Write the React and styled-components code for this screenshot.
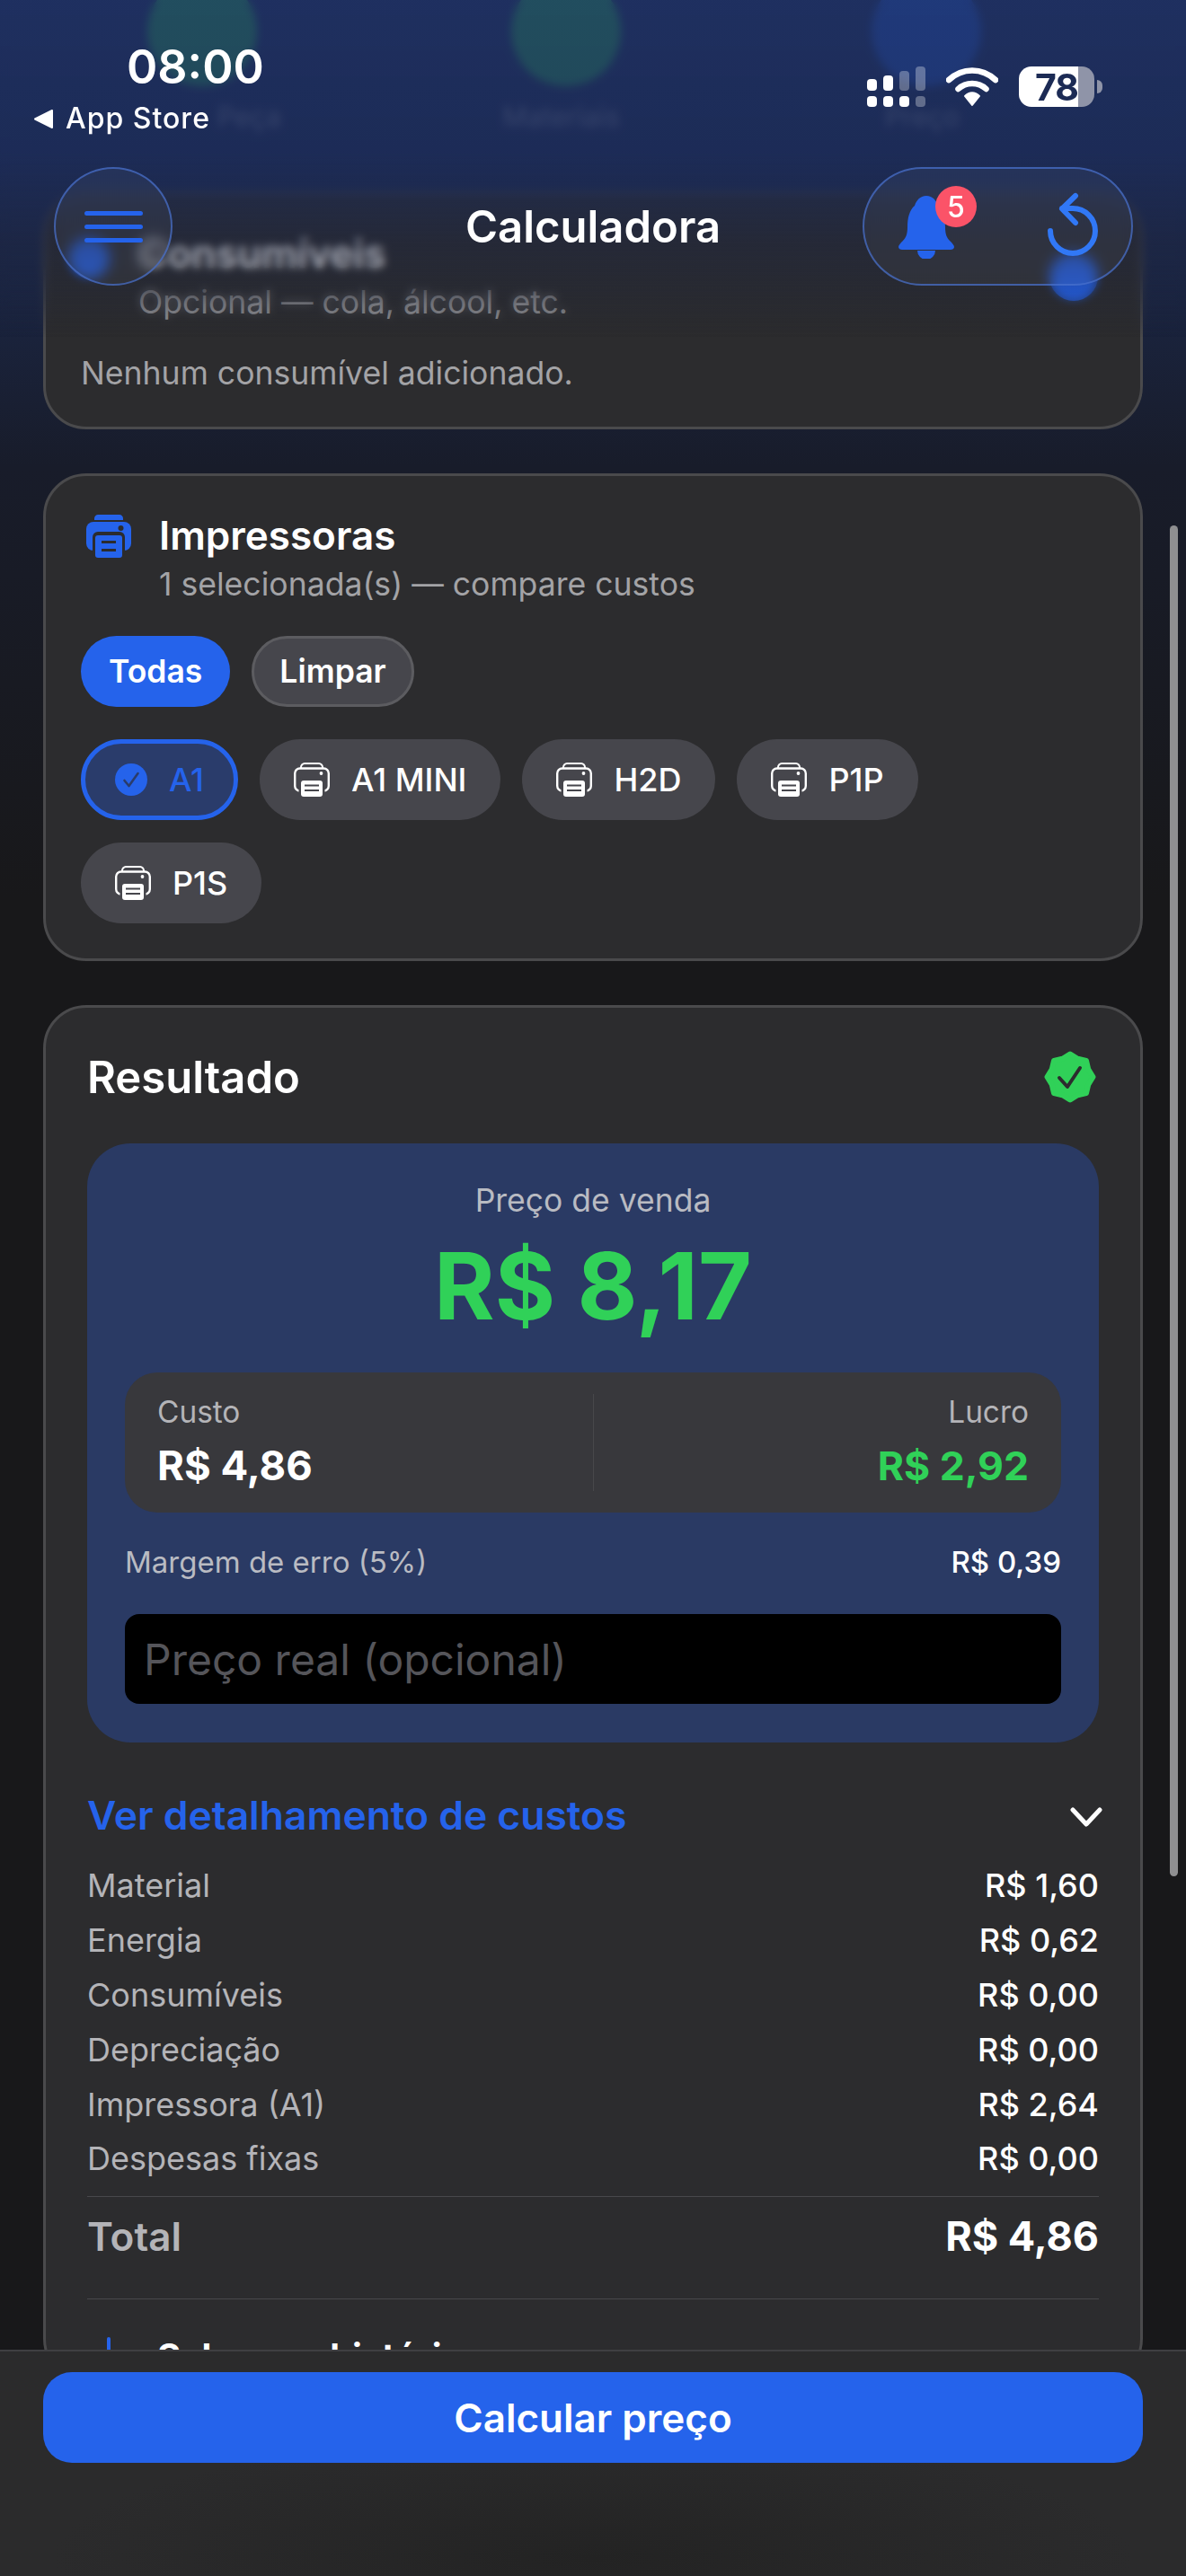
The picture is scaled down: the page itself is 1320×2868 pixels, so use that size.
import styled, { createGlobalStyle } from 'styled-components';

const GlobalStyle = createGlobalStyle`
  html, body {
    margin: 0;
    padding: 0;
    background: #18181a;
  }
  * {
    box-sizing: border-box;
  }
`;

const Screen = styled.div`
  position: relative;
  width: 1320px;
  height: 2868px;
  overflow: hidden;
  display: flex;
  flex-direction: column;
  font-family: Inter, "Noto Sans", sans-serif;
  color: #fff;
  background: linear-gradient(180deg, #1e2f5f 0, #1b2644 300px, #181c2a 520px, #18181a 1000px);
`;

const Scroll = styled.main`
  flex: 1;
  min-height: 0;
  overflow: hidden;
  padding: 0 48px;
`;

/* steps that scrolled under the header, only seen blurred */
const Steps = styled.div`
  height: 239px;
  margin: -26px -48px 0;
  padding: 0 0 0 164px;
  display: flex;
`;

const Step = styled.div`
  width: ${({ $wide }) => ($wide ? 435 : 370)}px;
  display: flex;
  flex-direction: column;
  align-items: flex-start;
`;

const StepDot = styled.div`
  width: 122px;
  height: 122px;
  border-radius: 50%;
  margin-left: ${({ $left }) => $left || 0}px;
  background: ${({ $color }) => $color};
`;

const StepLabel = styled.div`
  margin: 14px 0 0 ${({ $left }) => $left || 0}px;
  font-size: 30px;
  line-height: 40px;
  color: #b9bcc6;
`;

const Card = styled.section`
  border: 3px solid #4a4a4c;
  border-radius: 48px;
  background: #2c2c2e;
  padding: ${({ $result }) => ($result ? '49px 46px 0' : '41px 39px 39px')};
  margin-bottom: 49px;
`;

const CardHead = styled.div`
  display: flex;
  align-items: flex-start;
  gap: ${({ $gap }) => $gap}px;
  padding-left: ${({ $inset }) => $inset}px;
`;

const HeadText = styled.div`
  flex: 1;
`;

const CardTitle = styled.h2`
  margin: 0;
  font-size: 44px;
  line-height: 50px;
  font-weight: 600;
`;

const CardSub = styled.p`
  margin: 10px 0 0;
  font-size: 35.6px;
  line-height: 40px;
  color: #a3a3a6;
`;

const EmptyNote = styled.p`
  margin: 39px 0 0;
  font-size: 35.6px;
  line-height: 40px;
  color: #a3a3a6;
`;

const AddDot = styled.div`
  width: 54px;
  height: 54px;
  margin: 24px 8px 0 0;
  border-radius: 50%;
  background: #2563eb;
`;

const ActionRow = styled.div`
  display: flex;
  gap: 24px;
  margin-top: 37px;
`;

const ActionButton = styled.button`
  height: 79px;
  padding: 0 ${({ $primary }) => ($primary ? 31 : 28)}px;
  border-radius: 40px;
  border: ${({ $primary }) => ($primary ? 'none' : '3px solid #5c5c60')};
  background: ${({ $primary }) => ($primary ? '#2563eb' : '#46464c')};
  color: #fff;
  font: 600 35.5px Inter, sans-serif;
`;

const ChipRow = styled.div`
  display: flex;
  flex-wrap: wrap;
  gap: 25px 24px;
  margin-top: 36px;
`;

const Chip = styled.div`
  height: 90px;
  padding: 0 ${({ $active }) => ($active ? 33 : 38)}px;
  display: flex;
  align-items: center;
  gap: 24px;
  border-radius: 45px;
  font-size: 36px;
  font-weight: 500;
  color: ${({ $active }) => ($active ? '#2563eb' : '#fff')};
  background: ${({ $active }) => ($active ? '#2a3c6b' : '#46464c')};
  border: ${({ $active }) => ($active ? '5px solid #2563eb' : 'none')};
`;

const ResultHead = styled.div`
  height: 56px;
  display: flex;
  align-items: center;
  justify-content: space-between;
  padding-right: 3px;
`;

const ResultTitle = styled.h2`
  margin: 0;
  font-size: 49px;
  font-weight: 600;
`;

const PricePanel = styled.div`
  margin-top: 46px;
  height: 667px;
  padding: 44px 42px 0;
  border-radius: 48px;
  background: #2a3a64;
`;

const PriceLabel = styled.div`
  text-align: center;
  font-size: 35.5px;
  line-height: 40px;
  color: #b9bbc2;
`;

const PriceValue = styled.div`
  margin-top: 20px;
  text-align: center;
  font-size: 103px;
  line-height: 110px;
  font-weight: 700;
  color: #30d158;
`;

const Stats = styled.div`
  margin-top: 41px;
  height: 156px;
  padding: 24px 36px;
  display: flex;
  border-radius: 36px;
  background: #38383c;
`;

const StatCol = styled.div`
  flex: 1;
  text-align: ${({ $right }) => ($right ? 'right' : 'left')};
  border-left: ${({ $right }) => ($right ? '1px solid #48484b' : 'none')};
`;

const StatLabel = styled.div`
  font-size: 33.4px;
  line-height: 40px;
  color: #b4b4b8;
`;

const StatValue = styled.div`
  margin-top: 12px;
  font-size: ${({ $green }) => ($green ? 44.5 : 45.5)}px;
  line-height: 56px;
  font-weight: 700;
  color: ${({ $green }) => ($green ? '#30d158' : '#fff')};
`;

const MarginRow = styled.div`
  margin-top: 35px;
  display: flex;
  justify-content: space-between;
  font-size: 33px;
  line-height: 40px;
  color: #b9bbc2;

  strong {
    font-weight: 500;
    color: #fff;
  }
`;

const RealPrice = styled.input`
  display: block;
  width: 100%;
  height: 100px;
  margin-top: 38px;
  padding: 0 21px;
  border: none;
  border-radius: 16px;
  background: #000;
  font: 400 48px Inter, sans-serif;
  color: #fff;

  &::placeholder {
    color: #55555a;
    opacity: 1;
  }
`;

const DetailToggle = styled.div`
  margin-top: 51px;
  height: 60px;
  display: flex;
  align-items: center;
  justify-content: space-between;
  font-size: 44.4px;
  font-weight: 600;
  color: #2563eb;

  svg {
    margin: 3px -5px 0 0;
  }
`;

const CostList = styled.div`
  margin-top: 18px;
`;

const CostRow = styled.div`
  height: 60.8px;
  display: flex;
  align-items: center;
  justify-content: space-between;
  font-size: 36px;
  color: #b4b4b8;

  strong {
    font-size: 36px;
    font-weight: 500;
    color: #fff;
  }
`;

const TotalRow = styled.div`
  margin-top: 11px;
  padding: 14px 0 39px;
  display: flex;
  align-items: center;
  justify-content: space-between;
  line-height: 60px;
  border-top: 1px solid #48484b;
  border-bottom: 1px solid #48484b;
  font-size: 44px;
  font-weight: 600;
  color: #b4b4b8;

  strong {
    font-size: 45px;
    font-weight: 700;
    color: #fff;
  }
`;

const SaveRow = styled.div`
  margin-top: 39px;
  display: flex;
  align-items: center;
  gap: 30px;
  font-size: 40px;
  line-height: 50px;
  font-weight: 700;
`;

const Footer = styled.footer`
  position: relative;
  height: 252px;
  padding: 23px 48px 0;
  border-top: 2px solid #3f3f42;
  background: radial-gradient(ellipse 600px 140px at 660px 230px, #232323, #2b2b2c);
`;

const CalcButton = styled.button`
  display: block;
  width: 100%;
  height: 101px;
  border: none;
  border-radius: 32px;
  background: #2563eb;
  color: #fff;
  font: 600 44px Inter, sans-serif;
`;

const ScrollThumb = styled.div`
  position: absolute;
  top: 585px;
  right: 9px;
  width: 9px;
  height: 1504px;
  border-radius: 5px;
  background: #8f8f91;
`;

/* header floating over the scrolled content */
const Blur = styled.div`
  position: absolute;
  inset: 0 0 auto 0;
  height: 380px;
  backdrop-filter: blur(5px);
  mask-image: linear-gradient(180deg, #000 0, #000 295px, transparent 375px);
  pointer-events: none;
`;

const Tint = styled.div`
  position: absolute;
  inset: 0 0 auto 0;
  height: 380px;
  background: linear-gradient(
    180deg,
    rgba(31, 48, 96, 0.82) 0,
    rgba(29, 44, 88, 0.84) 170px,
    rgba(30, 38, 66, 0.48) 270px,
    rgba(30, 38, 60, 0) 375px
  );
  pointer-events: none;
`;

const Header = styled.header`
  position: absolute;
  inset: 0 0 auto 0;
`;

const StatusBar = styled.div`
  height: 186px;
  display: flex;
  justify-content: space-between;
  padding: 39px 102px 0 37px;
`;

const StatusLeft = styled.div`
  display: flex;
  flex-direction: column;
`;

const Clock = styled.div`
  margin-left: 104px;
  font-size: 52px;
  line-height: 72px;
  font-weight: 600;
`;

const BackLink = styled.div`
  margin-top: 1px;
  display: flex;
  align-items: center;
  gap: 13px;
  font-size: 32px;
  line-height: 40px;
  font-weight: 500;
  letter-spacing: 1px;
`;

const StatusRight = styled.div`
  display: flex;
  align-items: flex-start;
  gap: 23px;
  padding-top: 35px;
`;

const Battery = styled.div`
  position: relative;
  width: 84px;
  height: 45px;
  padding-right: 18px;
  display: flex;
  align-items: center;
  justify-content: flex-end;
  border-radius: 14px;
  background: linear-gradient(90deg, #fff 66px, #8f94a8 66px);
  color: #1c2b55;
  font-size: 41px;
  font-weight: 700;
  letter-spacing: -1px;

  &::after {
    content: '';
    position: absolute;
    right: -9px;
    top: 15px;
    width: 6px;
    height: 15px;
    border-radius: 0 6px 6px 0;
    background: #8f94a8;
  }
`;

const NavBar = styled.div`
  display: grid;
  grid-template-columns: 1fr auto 1fr;
  align-items: center;
  padding: 0 60px;
`;

const Glass = styled.div`
  height: 132px;
  border-radius: 66px;
  border: 2px solid rgba(72, 112, 205, 0.72);
  background: rgba(255, 255, 255, 0.045);
  backdrop-filter: blur(6px);
`;

const MenuButton = styled(Glass)`
  width: 132px;
  display: flex;
  flex-direction: column;
  align-items: center;
  justify-content: center;
  gap: 10px;
`;

const MenuLine = styled.span`
  width: 65px;
  height: 5px;
  border-radius: 3px;
  background: #2563eb;
`;

const NavTitle = styled.h1`
  margin: 0;
  font-size: 49px;
  font-weight: 600;
`;

const ActionPill = styled(Glass)`
  justify-self: end;
  width: 301px;
  margin-right: -1px;
  padding: 30px 35px 0 38px;
  display: flex;
  align-items: flex-start;
  justify-content: space-between;
`;

const BellWrap = styled.div`
  position: relative;
  width: 62px;
  height: 70px;
`;

const Badge = styled.span`
  position: absolute;
  top: -11px;
  left: 41px;
  width: 46px;
  height: 46px;
  display: flex;
  align-items: center;
  justify-content: center;
  border-radius: 50%;
  background: #fb5368;
  font-size: 32px;
  font-weight: 500;
`;

const printerFill = '#2563eb';
const cardFill = '#2c2c2e';

function SolidPrinter() {
  return (
    <svg width="50" height="48" viewBox="0 0 50 48" style={{ marginTop: 2, flex: 'none' }}>
      <path d="M9 6V4c0-2 2-4 4-4h24c2 0 4 2 4 4v2z" fill={printerFill} />
      <rect x="0" y="8" width="50" height="32" rx="8" fill={printerFill} />
      <circle cx="38.500" cy="15" r="3" fill={cardFill} />
      <rect x="7" y="19" width="36" height="29" rx="6" fill={cardFill} />
      <rect x="10" y="23" width="30" height="25" rx="3" fill={printerFill} />
      <path d="M17 30.500h16M17 39.500h16" stroke={cardFill} strokeWidth="3" />
    </svg>
  );
}

function ChipPrinter() {
  const chipFill = '#46464c';
  return (
    <svg width="40" height="38" viewBox="0 0 40 38" style={{ flex: 'none' }}>
      <path d="M8 6V5c0-2 2-4 4-4h16c2 0 4 2 4 4v1" fill="none" stroke="#fff" strokeWidth="2" />
      <rect x="1.200" y="6.500" width="37.600" height="25" rx="5.500" fill="none" stroke="#fff" strokeWidth="2.400" />
      <circle cx="30.500" cy="12" r="1.900" fill="#fff" />
      <rect x="5.500" y="17" width="29" height="21" rx="4" fill={chipFill} />
      <rect x="8" y="20" width="24" height="18" rx="3" fill="#fff" />
      <path d="M12 25.500h16M12 31h16" stroke={chipFill} strokeWidth="2" />
    </svg>
  );
}

function CheckDot() {
  return (
    <svg width="36" height="36" viewBox="0 0 36 36" style={{ flex: 'none' }}>
      <circle cx="18" cy="18" r="18" fill="#2563eb" />
      <path d="M10.500 19l5 6 10-14" fill="none" stroke="#2a3c6b" strokeWidth="2.600" strokeLinecap="round" strokeLinejoin="round" />
    </svg>
  );
}

const starPoints = Array.from({ length: 16 }, (_, i) => {
  const radius = i % 2 ? 22 : 25.5;
  const angle = (i * Math.PI) / 8 - Math.PI / 2;
  return `${(29 + radius * Math.cos(angle)).toFixed(1)},${(29 + radius * Math.sin(angle)).toFixed(1)}`;
}).join(' ');

function VerifiedBadge() {
  return (
    <svg width="58" height="58" viewBox="0 0 58 58">
      <polygon points={starPoints} fill="#30d158" stroke="#30d158" strokeWidth="6" strokeLinejoin="round" />
      <path d="M17 30l9 10 14-21" fill="none" stroke="#2c2c2e" strokeWidth="4" strokeLinecap="round" strokeLinejoin="round" />
    </svg>
  );
}

function SignalIcon() {
  return (
    <svg width="65" height="45" viewBox="0 0 65 45">
      <g fill="#fff">
        <rect x="0" y="14" width="11" height="13" rx="4" />
        <rect x="18" y="10" width="11" height="17" rx="4" />
        <rect x="0" y="33" width="11" height="12" rx="4" />
        <rect x="18" y="33" width="11" height="12" rx="4" />
        <rect x="36" y="33" width="11" height="12" rx="4" />
      </g>
      <g fill="#fff" opacity="0.3">
        <rect x="36" y="5" width="11" height="22" rx="4" />
        <rect x="54" y="0" width="11" height="27" rx="4" />
        <rect x="54" y="33" width="11" height="12" rx="4" />
      </g>
    </svg>
  );
}

function WifiIcon() {
  return (
    <svg width="58" height="44" viewBox="0 0 58 44" style={{ marginTop: 1 }}>
      <path d="M3 14C18 0 40 0 55 14" fill="none" stroke="#fff" strokeWidth="6.5" strokeLinecap="round" />
      <path d="M13.5 24C22 16 36 16 44.5 24" fill="none" stroke="#fff" strokeWidth="6.5" strokeLinecap="round" />
      <path d="M21 32c5-5 11-5 16 0l-8 10z" fill="#fff" stroke="#fff" strokeWidth="2" strokeLinejoin="round" />
    </svg>
  );
}

function BellIcon() {
  return (
    <svg width="62" height="70" viewBox="0 0 62 70">
      <path
        d="M31 0c7 0 11 5 13 11 6 5 8 14 8 24 0 8 2 12 5 15 3 3 5 5 5 7 0 2-2 3-4 3H4c-2 0-4-1-4-3 0-2 2-4 5-7 3-3 5-7 5-15 0-10 2-19 8-24 2-6 6-11 13-11z"
        fill="#2563eb"
      />
      <path d="M21 59h20a10 10 0 0 1-20 0z" fill="#2563eb" transform="translate(0 2)" />
    </svg>
  );
}

function UndoIcon() {
  return (
    <svg width="62" height="76" viewBox="0 0 62 76" style={{ marginTop: -4 }}>
      <path
        d="M7 43A25 25 0 1 0 32 18H20M35 4L20 18.500L35 34"
        fill="none"
        stroke="#3178f6"
        strokeWidth="6"
        strokeLinecap="round"
        strokeLinejoin="round"
      />
    </svg>
  );
}

const printers = ['A1 MINI', 'H2D', 'P1P', 'P1S'];

const costs = [
  ['Material', 'R$ 1,60'],
  ['Energia', 'R$ 0,62'],
  ['Consumíveis', 'R$ 0,00'],
  ['Depreciação', 'R$ 0,00'],
  ['Impressora (A1)', 'R$ 2,64'],
  ['Despesas fixas', 'R$ 0,00'],
];

export default function App() {
  return (
    <Screen>
      <GlobalStyle />
      <Scroll>
        <Steps>
          <Step $wide>
            <StepDot $color="#30d158" />
            <StepLabel $left={78}>Peça</StepLabel>
          </Step>
          <Step $wide>
            <StepDot $color="#30d158" $left={-1} />
            <StepLabel $left={-10}>Materiais</StepLabel>
          </Step>
          <Step>
            <StepDot $color="#2563eb" $left={-5} />
            <StepLabel $left={10}>Preço</StepLabel>
          </Step>
        </Steps>

        <Card>
          <CardHead $gap={32} $inset={0}>
            <svg width="46" height="46" viewBox="0 0 46 46" style={{ margin: '7px 0 0 -14px', flex: 'none' }}>
              <circle cx="23" cy="23" r="23" fill="#2563eb" />
            </svg>
            <HeadText>
              <CardTitle>Consumíveis</CardTitle>
              <CardSub>Opcional — cola, álcool, etc.</CardSub>
            </HeadText>
            <AddDot />
          </CardHead>
          <EmptyNote>Nenhum consumível adicionado.</EmptyNote>
        </Card>

        <Card>
          <CardHead $gap={31} $inset={6}>
            <SolidPrinter />
            <HeadText>
              <CardTitle>Impressoras</CardTitle>
              <CardSub>1 selecionada(s) — compare custos</CardSub>
            </HeadText>
          </CardHead>
          <ActionRow>
            <ActionButton $primary>Todas</ActionButton>
            <ActionButton>Limpar</ActionButton>
          </ActionRow>
          <ChipRow>
            <Chip $active>
              <CheckDot />
              A1
            </Chip>
            {printers.map((name) => (
              <Chip key={name}>
                <ChipPrinter />
                {name}
              </Chip>
            ))}
          </ChipRow>
        </Card>

        <Card $result>
          <ResultHead>
            <ResultTitle>Resultado</ResultTitle>
            <VerifiedBadge />
          </ResultHead>
          <PricePanel>
            <PriceLabel>Preço de venda</PriceLabel>
            <PriceValue>R$ 8,17</PriceValue>
            <Stats>
              <StatCol>
                <StatLabel>Custo</StatLabel>
                <StatValue>R$ 4,86</StatValue>
              </StatCol>
              <StatCol $right>
                <StatLabel>Lucro</StatLabel>
                <StatValue $green>R$ 2,92</StatValue>
              </StatCol>
            </Stats>
            <MarginRow>
              <span>Margem de erro (5%)</span>
              <strong>R$ 0,39</strong>
            </MarginRow>
            <RealPrice placeholder="Preço real (opcional)" readOnly />
          </PricePanel>
          <DetailToggle>
            Ver detalhamento de custos
            <svg width="38" height="24" viewBox="0 0 38 24">
              <path d="M4 4l15 16L34 4" fill="none" stroke="#fff" strokeWidth="5" strokeLinecap="round" strokeLinejoin="round" />
            </svg>
          </DetailToggle>
          <CostList>
            {costs.map(([label, value]) => (
              <CostRow key={label}>
                <span>{label}</span>
                <strong>{value}</strong>
              </CostRow>
            ))}
          </CostList>
          <TotalRow>
            <span>Total</span>
            <strong>R$ 4,86</strong>
          </TotalRow>
          <SaveRow>
            <svg width="48" height="48" viewBox="0 0 48 48" style={{ flex: 'none' }}>
              <path d="M24 4v40M4 24h40" stroke="#2563eb" strokeWidth="4" strokeLinecap="round" />
            </svg>
            Salvar no histórico
          </SaveRow>
        </Card>
      </Scroll>

      <Footer>
        <CalcButton>Calcular preço</CalcButton>
      </Footer>

      <ScrollThumb />
      <Blur />
      <Tint />
      <Header>
        <StatusBar>
          <StatusLeft>
            <Clock>08:00</Clock>
            <BackLink>
              <svg width="23" height="23" viewBox="0 0 23 23">
                <path d="M21 2v19L2 11.500z" fill="#fff" stroke="#fff" strokeWidth="2" strokeLinejoin="round" />
              </svg>
              App Store
            </BackLink>
          </StatusLeft>
          <StatusRight>
            <SignalIcon />
            <WifiIcon />
            <Battery>78</Battery>
          </StatusRight>
        </StatusBar>
        <NavBar>
          <MenuButton>
            <MenuLine />
            <MenuLine />
            <MenuLine />
          </MenuButton>
          <NavTitle>Calculadora</NavTitle>
          <ActionPill>
            <BellWrap>
              <BellIcon />
              <Badge>5</Badge>
            </BellWrap>
            <UndoIcon />
          </ActionPill>
        </NavBar>
      </Header>
    </Screen>
  );
}
